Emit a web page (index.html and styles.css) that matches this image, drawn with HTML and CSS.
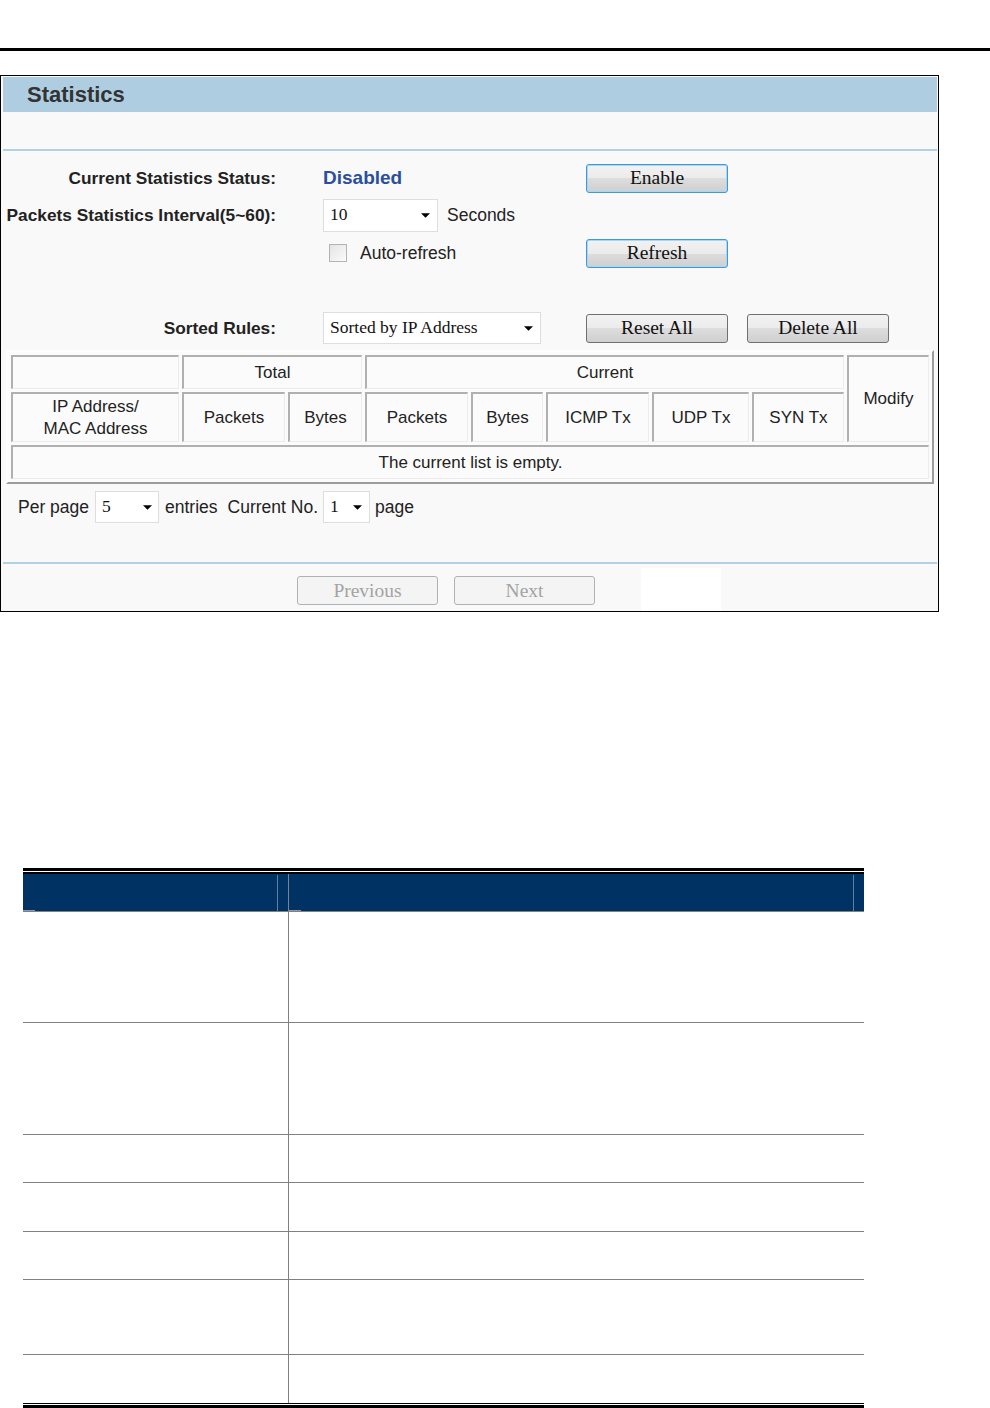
FILE: index.html
```html
<!DOCTYPE html>
<html lang="en">
<head>
<meta charset="utf-8">
<title>Statistics</title>
<link rel="stylesheet" href="styles.css">
</head>
<body>
<div class="rule-top"></div>

<div class="shot">
  <div class="title-bar">Statistics</div>
  <div class="sep sep-top"></div>

  <div class="form">
    <div class="label">Current Statistics Status:</div>
    <div class="value"><span class="status">Disabled</span></div>
    <div class="actions"><button class="btn btn-focus">Enable</button></div>

    <div class="label">Packets Statistics Interval(5~60):</div>
    <div class="value">
      <div class="select sel-interval"><span>10</span><svg viewBox="0 0 10 5"><path d="M0 0h10L5 5z"/></svg></div>
      <span class="text seconds">Seconds</span>
    </div>
    <div class="actions"></div>

    <div class="label"></div>
    <div class="value"><span class="checkbox"></span><span class="text">Auto-refresh</span></div>
    <div class="actions"><button class="btn btn-focus">Refresh</button></div>

    <div class="spacer"></div>

    <div class="label">Sorted Rules:</div>
    <div class="value">
      <div class="select sel-sort"><span>Sorted by IP Address</span><svg viewBox="0 0 10 5"><path d="M0 0h10L5 5z"/></svg></div>
    </div>
    <div class="actions"><button class="btn">Reset All</button><button class="btn">Delete All</button></div>
  </div>

  <div class="stats">
    <div class="cell c-blank"></div>
    <div class="cell c-total">Total</div>
    <div class="cell c-current">Current</div>
    <div class="cell c-modify">Modify</div>
    <div class="cell">IP Address/<br>MAC Address</div>
    <div class="cell">Packets</div>
    <div class="cell">Bytes</div>
    <div class="cell">Packets</div>
    <div class="cell">Bytes</div>
    <div class="cell">ICMP Tx</div>
    <div class="cell">UDP Tx</div>
    <div class="cell">SYN Tx</div>
    <div class="cell c-empty">The current list is empty.</div>
  </div>

  <div class="pager">
    <span>Per page</span>
    <div class="select sel-perpage"><span>5</span><svg viewBox="0 0 10 5"><path d="M0 0h10L5 5z"/></svg></div>
    <span class="pg-entries">entries</span>
    <span class="pg-current">Current No.</span>
    <div class="select sel-page"><span>1</span><svg viewBox="0 0 10 5"><path d="M0 0h10L5 5z"/></svg></div>
    <span class="pg-page">page</span>
  </div>

  <div class="sep sep-bottom"></div>

  <div class="nav">
    <button class="btn btn-disabled btn-prev" disabled>Previous</button>
    <button class="btn btn-disabled btn-next" disabled>Next</button>
    <div class="blank-box"></div>
  </div>
</div>

<div class="doc">
  <div class="doc-thick"></div>
  <div class="doc-thin doc-thin-top"></div>
  <div class="doc-grid">
    <div class="dh dh1"><div class="dh-inner dh-inner1"><div class="tick"></div></div></div>
    <div class="dh dh2"><div class="dh-inner dh-inner2"><div class="tick"></div></div></div>
    <div class="dc l"></div><div class="dc r"></div>
    <div class="dc l"></div><div class="dc r"></div>
    <div class="dc l"></div><div class="dc r"></div>
    <div class="dc l"></div><div class="dc r"></div>
    <div class="dc l"></div><div class="dc r"></div>
    <div class="dc l"></div><div class="dc r"></div>
    <div class="dc l last"></div><div class="dc r last"></div>
  </div>
  <div class="doc-thin doc-thin-bottom"></div>
  <div class="doc-thick doc-thick-bottom"></div>
</div>
</body>
</html>
```

FILE: styles.css
```css
html, body {
  margin: 0;
  padding: 0;
  background: #ffffff;
}

body {
  font-family: "Liberation Sans", Arial, sans-serif;
  color: #222222;
}

.rule-top {
  height: 3px;
  margin-top: 48px;
  background: #000000;
}

/* ---------- screenshot frame ---------- */
.shot {
  margin-top: 24px;
  width: 939px;
  height: 537px;
  box-sizing: border-box;
  border: 1px solid #000000;
  padding: 1px 1px 0 2px;
  background: #f9f9f9;
}

.title-bar {
  height: 35px;
  display: flex;
  align-items: center;
  padding-left: 24px;
  background: #aecde0;
  color: #333333;
  font-size: 22px;
  font-weight: bold;
}

.sep {
  height: 2px;
  background: #b3d1e3;
}

.sep-top {
  margin-top: 37px;
}

.sep-bottom {
  margin-top: 37px;
}

/* ---------- form ---------- */
.form {
  padding-top: 8.5px;
  display: grid;
  grid-template-columns: 320px 263px 1fr;
  grid-auto-rows: 37.5px;
}

.label {
  display: flex;
  align-items: center;
  justify-content: flex-end;
  padding-right: 47px;
  font-size: 17.3px;
  font-weight: bold;
  white-space: nowrap;
  color: #222222;
}

.value {
  display: flex;
  align-items: center;
}

.actions {
  display: flex;
  align-items: center;
  gap: 19px;
}

.spacer {
  grid-column: 1 / -1;
}

.status {
  color: #2b4f9c;
  font-size: 19px;
  font-weight: bold;
}

.text {
  font-size: 17.5px;
  color: #222222;
}

.seconds {
  margin-left: 9px;
}

.select {
  box-sizing: border-box;
  height: 32px;
  display: flex;
  align-items: center;
  justify-content: space-between;
  padding: 0 7px 2px 6px;
  background: #ffffff;
  border: 1px solid #dedede;
  font-family: "Liberation Serif", "Times New Roman", serif;
  font-size: 17.5px;
  color: #111111;
}

.select svg {
  width: 9px;
  height: 5px;
  margin-top: 2px;
  fill: #000000;
}

.sel-interval {
  width: 115px;
  height: 33px;
}

.sel-sort {
  width: 218px;
}

.sel-perpage {
  width: 64px;
  margin-left: 6px;
  padding-right: 6px;
}

.sel-page {
  width: 47px;
  margin-left: 5px;
}

.checkbox {
  width: 18px;
  height: 18px;
  box-sizing: border-box;
  margin-left: 6px;
  margin-right: 13px;
  border: 1px solid #b4b4b4;
  background: linear-gradient(135deg, #e4e4e4, #fbfbfb);
}

/* ---------- buttons ---------- */
.btn {
  width: 142px;
  height: 29px;
  box-sizing: border-box;
  padding: 0;
  border: 1px solid #707070;
  border-radius: 3px;
  background: linear-gradient(#f2f2f2 0%, #ebebeb 50%, #dddddd 50%, #cfcfcf 100%);
  font-family: "Liberation Serif", "Times New Roman", serif;
  font-size: 19.5px;
  line-height: 26px;
  color: #111111;
}

.btn-focus {
  border-color: #3c9ad8;
  box-shadow: inset 0 0 0 1px #a9d7f3;
}

.btn-disabled {
  width: 141px;
  border-color: #adb2b5;
  background: #f4f4f4;
  color: #a3a3a3;
}

/* ---------- stats table ---------- */
.stats {
  margin: 3px 0 0 3px;
  width: 928px;
  box-sizing: border-box;
  display: grid;
  grid-template-columns: 168px 103px 74px 103px 72px 103px 97px 92px 82px;
  grid-template-rows: 34px 50px 34px;
  gap: 3px;
  padding: 3px;
  border: 2px solid;
  border-color: #fdfdfd #9c9c9c #9c9c9c #fdfdfd;
  background: #fbfbfb;
  font-size: 17px;
  color: #222222;
}

.cell {
  display: flex;
  align-items: center;
  justify-content: center;
  text-align: center;
  line-height: 22px;
  border-style: solid;
  border-width: 2px 1px 1px 2px;
  border-color: #b0b0b0 #ececec #ececec #b0b0b0;
}

.c-blank { grid-column: 1; grid-row: 1; }
.c-total { grid-column: 2 / 4; grid-row: 1; }
.c-current { grid-column: 4 / 9; grid-row: 1; }
.c-modify { grid-column: 9; grid-row: 1 / 3; }
.c-empty { grid-column: 1 / -1; grid-row: 3; }

/* ---------- pager ---------- */
.pager {
  margin-top: 5px;
  height: 36px;
  display: flex;
  align-items: center;
  padding-left: 15px;
  font-size: 17.5px;
  color: #222222;
}

.pg-entries { margin-left: 6px; }
.pg-current { margin-left: 10px; }
.pg-page { margin-left: 5px; }

/* ---------- nav ---------- */
.nav {
  height: 47px;
  display: flex;
  align-items: flex-start;
}

.btn-prev {
  margin-top: 12px;
  margin-left: 294px;
}

.btn-next {
  margin-top: 12px;
  margin-left: 16px;
}

.blank-box {
  margin-top: 4px;
  margin-left: 46px;
  width: 80px;
  height: 43px;
  background: #ffffff;
}

/* ---------- document table ---------- */
.doc {
  margin: 256px 0 0 23px;
  width: 841px;
}

.doc-thick {
  height: 3px;
  background: #000000;
}

.doc-thin {
  background: #000000;
}

.doc-thin-top {
  height: 2px;
  margin-top: 1px;
}

.doc-thin-bottom {
  height: 1px;
}

.doc-thick-bottom {
  margin-top: 1px;
}

.doc-grid {
  display: grid;
  grid-template-columns: 266px 575px;
  grid-template-rows: 38px 111px 112px 48px 49px 48px 75px 48px;
}

.dh {
  background: #013264;
  border-bottom: 1px solid #808080;
  padding-top: 1px;
}

.dh1 {
  border-right: 1px solid #7a8593;
}

.dh-inner {
  height: 36px;
  box-sizing: border-box;
  display: flex;
  flex-direction: column;
  border-right: 1px solid #5f7fa3;
}

.dh-inner1 { width: 255px; }
.dh-inner2 { width: 565px; }

.tick {
  margin-top: auto;
  width: 12px;
  height: 1px;
  background: #8a9bb0;
}

.dc {
  border-bottom: 1px solid #808080;
}

.dc.l {
  border-right: 1px solid #808080;
}

.dc.last {
  border-bottom: none;
}
```
